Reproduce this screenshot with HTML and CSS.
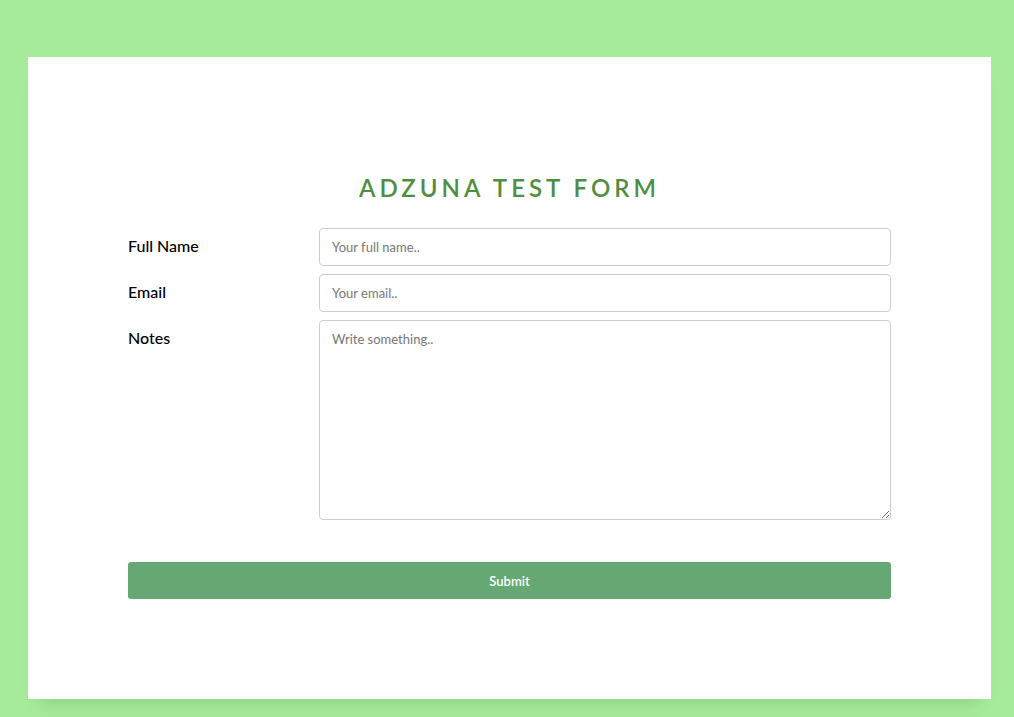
FILE: index.html
```html
<!DOCTYPE html>
<html>
<head>
<meta charset="utf-8">
<link rel="stylesheet" href="styles.css">
</head>
<body>
<div class="card">
  <h2 class="title">ADZUNA TEST FORM</h2>
  <form class="form">
    <div class="row">
      <label class="label" for="fname">Full Name</label>
      <input class="field" id="fname" type="text" placeholder="Your full name..">
    </div>
    <div class="row">
      <label class="label" for="email">Email</label>
      <input class="field" id="email" type="text" placeholder="Your email..">
    </div>
    <div class="row">
      <label class="label" for="notes">Notes</label>
      <textarea class="field area" id="notes" placeholder="Write something.."></textarea>
    </div>
    <button class="submit" type="button">Submit</button>
  </form>
</div>
</body>
</html>
```
FILE: styles.css
```css
html, body {
  margin: 0;
  height: 100%;
}
body {
  background: #a6eb9a;
  padding: 57px 23px 18px 28px;
  box-sizing: border-box;
  font-family: "Lato", "Noto Sans", sans-serif;
}
.card {
  background: #fff;
  height: 642px;
  box-sizing: border-box;
  padding: 117px 100px 0 100px;
  box-shadow: 0 14px 18px -12px rgba(0,0,0,0.15);
}
.title {
  margin: 0 0 26px 0;
  text-align: center;
  color: #4f8e40;
  font-size: 24px;
  font-weight: 600;
  letter-spacing: 4px;
  line-height: 28px;
}
.form {
  display: flex;
  flex-direction: column;
}
.row {
  display: flex;
  margin-bottom: 8px;
}
.label {
  width: 191px;
  flex: none;
  font-size: 16px;
  font-weight: 500;
  color: #000;
  padding-top: 9px;
  line-height: 18px;
}
.field {
  flex: 1;
  height: 38px;
  box-sizing: border-box;
  border: 1px solid #cccccc;
  border-radius: 4px;
  padding: 8px 12px;
  font-family: inherit;
  font-size: 13px;
  color: #333;
  margin: 0;
}
.field::placeholder {
  color: #777;
}
.area {
  height: 200px;
  resize: vertical;
  padding-top: 10px;
}
.submit {
  margin-top: 34px;
  height: 37px;
  background: #65a874;
  color: #fff;
  border: none;
  border-radius: 3px;
  font-family: inherit;
  font-weight: 600;
  font-size: 13px;
}
```
